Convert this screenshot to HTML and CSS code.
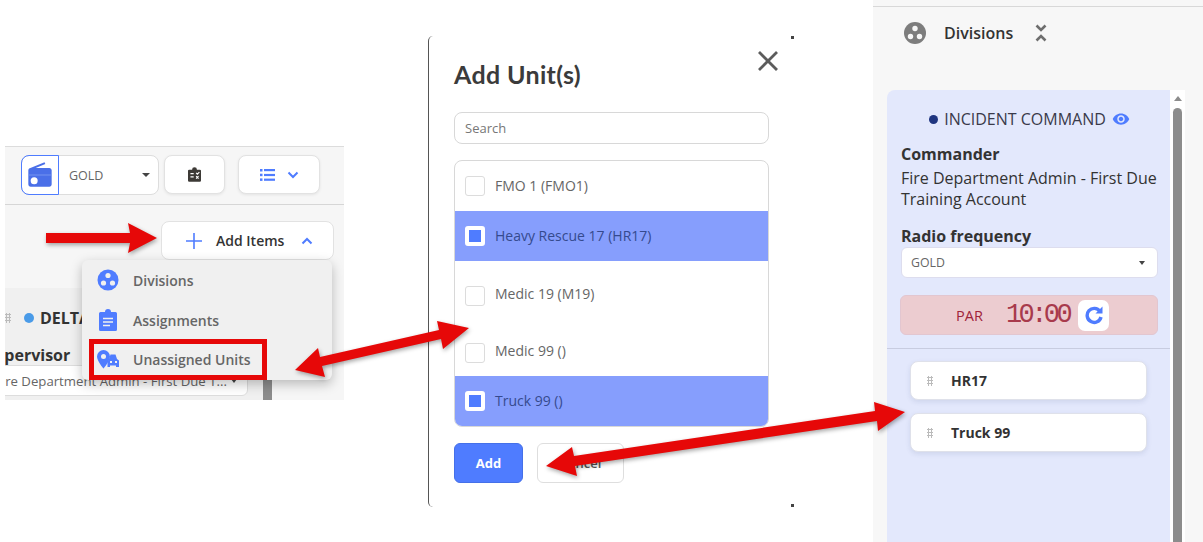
FILE: index.html
```html
<!DOCTYPE html>
<html lang="en">

<head>
    <meta charset="UTF-8">
    <title>Add Units</title>
    <link rel="stylesheet" href="styles.css">
</head>

<body>

    <!-- left shot: toolbar and add items menu -->
    <section class="shot-toolbar">
        <div class="toolbar">
            <div class="radio-group">
                <span class="radio-icon">
                    <svg width="28" height="28" viewBox="0 0 24 24"><path d="M3.240 6.150C2.510 6.430 2 7.170 2 8v12c0 1.100.89 2 2 2h16c1.110 0 2-.9 2-2V8c0-1.110-.89-2-2-2H8.300l8.260-3.340L15.880 1 3.240 6.150z" fill="#4a6fe8"/><circle cx="7" cy="17" r="3" fill="#fff"/><path d="M2.500 12h19" stroke="#6f8ff0" stroke-width="1"/></svg>
                </span>
                <span class="radio-value">GOLD</span>
                <span class="caret"></span>
            </div>
            <button class="tool-btn btn-clip">
                <svg width="13" height="15" viewBox="0 0 16 18"><path d="M1.500 3H5a3 3 0 0 1 6 0h3.500A1.500 1.500 0 0 1 16 4.500V16.500A1.500 1.500 0 0 1 14.500 18H1.500A1.500 1.500 0 0 1 0 16.500V4.500A1.500 1.500 0 0 1 1.500 3z" fill="#3d3a36"/><path d="M3 8h4M3 12h4M10 7l1.500 1.500L14 6M10 11l3 3M13 11l-3 3" stroke="#fff" stroke-width="1.400" fill="none"/></svg>
            </button>
            <button class="tool-btn btn-list">
                <svg width="15" height="12" viewBox="0 0 15 12" fill="#4f7cff"><rect x="0" y="0" width="2.500" height="2.500"/><rect x="4" y="0" width="11" height="2.200"/><rect x="0" y="4.700" width="2.500" height="2.500"/><rect x="4" y="4.900" width="11" height="2.200"/><rect x="0" y="9.400" width="2.500" height="2.500"/><rect x="4" y="9.600" width="11" height="2.200"/></svg>
                <svg width="12" height="8" viewBox="0 0 12 8" fill="none" stroke="#4f7cff" stroke-width="2"><path d="M1.500 1.500 6 6l4.500-4.500"/></svg>
            </button>
        </div>

        <div class="add-row">
            <button class="add-btn">
                <svg width="16" height="16" viewBox="0 0 16 16" stroke="#4f7cff" stroke-width="1.600"><path d="M8 0v16M0 8h16"/></svg>
                <span class="add-label">Add Items</span>
                <svg width="12" height="8" viewBox="0 0 12 8" fill="none" stroke="#4f7cff" stroke-width="2"><path d="M1.500 6.500 6 2l4.500 4.500"/></svg>
            </button>
        </div>

        <div class="delta-card">
            <div class="delta-title">
                <span class="grip grip-left"></span>
                <span class="dot dot-delta"></span>
                <span>DELTA</span>
            </div>
            <div class="delta-label">Supervisor</div>
            <div class="delta-select">
                <span class="delta-value">Fire Department Admin - First Due T...</span>
                <span class="caret caret-small"></span>
            </div>
        </div>
        <div class="delta-scroll"></div>

        <div class="add-menu">
            <div class="menu-item">
                <svg width="22" height="22" viewBox="0 0 22 22"><circle cx="11" cy="11" r="10.500" fill="#4f7cff"/><circle cx="11" cy="6.500" r="2.600" fill="#f0f0f0"/><circle cx="6.500" cy="14" r="2.600" fill="#f0f0f0"/><circle cx="15.500" cy="14" r="2.600" fill="#f0f0f0"/></svg>
                <span>Divisions</span>
            </div>
            <div class="menu-item">
                <svg width="22" height="22" viewBox="0 0 22 22"><path d="M3.500 3H8a3 3 0 0 1 6 0h4.500A1.500 1.500 0 0 1 20 4.500v16a1.500 1.500 0 0 1-1.500 1.500h-15A1.500 1.500 0 0 1 2 20.500v-16A1.500 1.500 0 0 1 3.500 3z" fill="#4f7cff"/><path d="M6 9.500h10M6 13h10M6 16.500h7" stroke="#f0f0f0" stroke-width="1.600"/></svg>
                <span>Assignments</span>
            </div>
            <div class="menu-item menu-item-marked">
                <svg width="22" height="19" viewBox="0 0 22 19"><path d="M6.500 0A6.500 6.500 0 0 0 0 6.500C0 11 6.500 18.500 6.500 18.500S13 11 13 6.500A6.500 6.500 0 0 0 6.500 0z" fill="#4f7cff"/><circle cx="6.500" cy="6.500" r="2.500" fill="#f0f0f0"/><path d="M12 9l1.500-4.500h5L20 9l2 1.500V17h-3v-1.500h-6V17h-2.500v-5z" fill="#4f7cff"/><rect x="13" y="11" width="2" height="2" fill="#f0f0f0"/><rect x="18" y="11" width="2" height="2" fill="#f0f0f0"/></svg>
                <span>Unassigned Units</span>
            </div>
        </div>
    </section>

    <!-- middle shot: add units dialog -->
    <section class="shot-modal">
        <span class="corner corner-top"></span>
        <span class="corner corner-bottom"></span>
        <svg class="modal-close" width="20" height="20" viewBox="0 0 20 20" stroke="#5c5c5c" stroke-width="2.800"><path d="M1 1l18 18M19 1 1 19"/></svg>
        <h2 class="modal-title">Add Unit(s)</h2>
        <div class="modal-search">Search</div>
        <ul class="unit-list">
            <li class="unit-row"><span class="check"></span>FMO 1 (FMO1)</li>
            <li class="unit-row selected"><span class="check"></span>Heavy Rescue 17 (HR17)</li>
            <li class="unit-row row-medic19"><span class="check"></span>Medic 19 (M19)</li>
            <li class="unit-row row-medic99"><span class="check"></span>Medic 99 ()</li>
            <li class="unit-row selected"><span class="check"></span>Truck 99 ()</li>
        </ul>
        <div class="modal-actions">
            <button class="btn-add">Add</button>
            <button class="btn-cancel">Cancel</button>
        </div>
    </section>

    <!-- right shot: divisions column -->
    <section class="shot-divisions">
        <div class="div-rule"></div>
        <div class="div-header">
            <svg width="22" height="22" viewBox="0 0 22 22"><circle cx="11" cy="11" r="11" fill="#7d7d7d"/><circle cx="11" cy="6.500" r="2.700" fill="#f7f7f7"/><circle cx="6.500" cy="14.500" r="2.700" fill="#f7f7f7"/><circle cx="15.500" cy="14.500" r="2.700" fill="#f7f7f7"/></svg>
            <span class="div-title">Divisions</span>
            <svg class="div-toggle" width="12" height="18" viewBox="0 0 12 18" fill="none" stroke="#6e6e6e" stroke-width="2.600"><path d="M1.500 1.500 6 6l4.500-4.500M1.500 16.500 6 12l4.500 4.500"/></svg>
        </div>

        <div class="div-body">
            <div class="command-card">
                <div class="command-top">
                    <div class="command-title">
                        <span class="dot dot-command"></span>
                        <span>INCIDENT COMMAND</span>
                        <svg width="18" height="18" viewBox="0 0 24 24" fill="#4f7cff"><path d="M12 4.500C7 4.500 2.730 7.610 1 12c1.730 4.390 6 7.500 11 7.500s9.270-3.110 11-7.500c-1.730-4.390-6-7.500-11-7.500zM12 17c-2.760 0-5-2.240-5-5s2.240-5 5-5 5 2.240 5 5-2.240 5-5 5zm0-8c-1.660 0-3 1.340-3 3s1.340 3 3 3 3-1.340 3-3-1.340-3-3-3z"/></svg>
                    </div>
                    <div class="field-label">Commander</div>
                    <div class="field-text">Fire Department Admin - First Due Training Account</div>
                    <div class="field-label label-radio">Radio frequency</div>
                    <div class="freq-select">
                        <span>GOLD</span>
                        <span class="caret caret-small"></span>
                    </div>
                    <div class="par-box">
                        <span class="par-label">PAR</span>
                        <span class="par-time">10:00</span>
                        <span class="par-reset">
                            <svg width="20" height="20" viewBox="0 0 20 20" fill="none"><path d="M16 6.500A7 7 0 1 0 17 12" stroke="#4f7cff" stroke-width="3.400"/><path d="M18.500 1.500v7h-7z" fill="#4f7cff"/></svg>
                        </span>
                    </div>
                </div>
                <div class="unit-cards">
                    <div class="unit-card"><span class="grip"></span>HR17</div>
                    <div class="unit-card"><span class="grip"></span>Truck 99</div>
                </div>
            </div>
            <div class="card-scroll">
                <span class="scroll-up"></span>
                <span class="scroll-thumb"></span>
            </div>
        </div>
    </section>

    <!-- red arrows drawn over the three shots -->
    <svg class="arrows" width="1203" height="542" viewBox="0 0 1203 542" fill="#e60808">
        <polygon points="46,233 130,233 128,223 157,238 128,253 130,243 46,243"/>
        <polygon points="295,370 318,348 320,357 439,330 437,321 469,328 443,349 441,339 322,366 325,377"/>
        <polygon points="546,466 572,447 574,456 875,411 874,402 905,412 878,431 877,421 575,466 577,476"/>
    </svg>

</body>

</html>
```

FILE: styles.css
```css
* {
    box-sizing: border-box;
}

html,
body {
    margin: 0;
    padding: 0;
}

body {
    position: relative;
    width: 1203px;
    height: 542px;
    overflow: hidden;
    background-color: white;
    font-family: "Open Sans", sans-serif;
    color: #333;
}

button {
    font-family: inherit;
}

.caret {
    width: 0;
    height: 0;
    border-left: 4px solid transparent;
    border-right: 4px solid transparent;
    border-top: 4px solid #444;
}

.caret-small {
    border-left-width: 3.5px;
    border-right-width: 3.5px;
}

.dot {
    display: inline-block;
    border-radius: 50%;
}

.grip {
    display: inline-block;
    width: 6px;
    height: 10px;
    background-image: radial-gradient(#bbb 1px, transparent 1.2px);
    background-size: 3px 3px;
}

/* left shot */
.shot-toolbar {
    position: absolute;
    left: 5px;
    top: 146px;
    width: 339px;
    height: 254px;
    overflow: hidden;
    background-color: #f6f6f6;
    border-top: 1px solid #dcdcdc;
}

.toolbar {
    display: flex;
    height: 58px;
    padding: 8px 0 0 16px;
    border-bottom: 1px solid #d6d6d6;
}

.radio-group {
    display: flex;
    align-items: center;
    width: 138px;
    height: 40px;
    background-color: white;
    border: 1px solid #ddd;
    border-radius: 8px;
}

.radio-icon {
    display: flex;
    align-items: center;
    justify-content: center;
    width: 38px;
    height: 40px;
    margin: -1px 0 -1px -1px;
    border: 1px solid #4f7cff;
    border-radius: 8px 0 0 8px;
}

.radio-value {
    flex: 1;
    padding-left: 10px;
    font-size: 12.500px;
    color: #666;
}

.radio-group .caret {
    margin-right: 8px;
}

.tool-btn {
    display: flex;
    align-items: center;
    justify-content: center;
    height: 39px;
    padding: 0;
    background-color: white;
    border: 1px solid #e2e2e2;
    border-radius: 8px;
    box-shadow: 0 1px 3px rgba(0, 0, 0, 0.08);
}

.btn-clip {
    width: 61px;
    margin-left: 5px;
}

.btn-list {
    width: 82px;
    margin-left: 13px;
    gap: 12px;
}

.add-row {
    display: flex;
    justify-content: flex-end;
    padding: 16px 10px 0 0;
}

.add-btn {
    display: flex;
    align-items: center;
    width: 173px;
    height: 39px;
    padding: 0 20px 0 24px;
    background-color: white;
    border: 1px solid #e2e2e2;
    border-radius: 8px;
    font-size: 14px;
    font-weight: 600;
    color: #333;
}

.add-label {
    flex: 1;
    padding-left: 14px;
    text-align: left;
}

.delta-card {
    width: 258px;
    height: 112px;
    margin-top: 28px;
    overflow: hidden;
    background-color: #f0f0f0;
}

.delta-title {
    display: flex;
    align-items: center;
    height: 57px;
    padding-top: 2px;
    font-size: 16px;
    font-weight: 700;
}

.dot-delta {
    width: 10px;
    height: 10px;
    margin: 0 6px 0 13px;
    background-color: #4a9be8;
}

.grip-left {
    margin-left: 0;
}

.delta-label {
    margin-left: -20px;
    font-size: 16px;
    font-weight: 700;
    line-height: 20px;
}

.delta-select {
    display: flex;
    align-items: center;
    width: 263px;
    height: 31px;
    margin: 0 0 0 -20px;
    padding: 0 10px 0 9px;
    background-color: white;
    border: 1px solid #ddd;
    border-radius: 6px;
    font-size: 13.200px;
    color: #666;
    white-space: nowrap;
}

.delta-value {
    flex: 1;
}

.delta-scroll {
    position: absolute;
    left: 258px;
    top: 233px;
    width: 9px;
    height: 20px;
    background-color: #8c8c8c;
}

.add-menu {
    position: absolute;
    left: 77px;
    top: 113px;
    width: 250px;
    height: 120px;
    background-color: #f0f0f0;
    border-radius: 6px;
    box-shadow: 0 4px 12px rgba(0, 0, 0, 0.25);
}

.menu-item {
    display: flex;
    align-items: center;
    gap: 14px;
    height: 40px;
    padding-left: 15px;
    font-size: 14px;
    font-weight: 600;
    color: #666;
}

.menu-item-marked {
    width: 178px;
    height: 41px;
    margin: -1px 0 0 7px;
    padding-left: 3px;
    border: 5px solid #e60808;
}

/* middle shot */
.shot-modal {
    position: absolute;
    left: 428px;
    top: 36px;
    width: 366px;
    height: 471px;
    padding: 0 25px;
    background-color: white;
    border-left: 1px solid #555;
    border-top-left-radius: 5px;
    border-bottom-left-radius: 5px;
}

.corner {
    position: absolute;
    right: 0;
    width: 3px;
    height: 3px;
    background-color: #444;
}

.corner-top {
    top: 0;
}

.corner-bottom {
    bottom: 0;
}

.modal-close {
    position: absolute;
    left: 329px;
    top: 15px;
}

.modal-title {
    margin: 0;
    padding-top: 21px;
    height: 76px;
    font-family: Lato, sans-serif;
    font-size: 25px;
    font-weight: 700;
    line-height: 34px;
    letter-spacing: 0.350px;
    color: #3b3b3b;
}

.modal-search {
    height: 32px;
    padding-left: 10px;
    border: 1px solid #d8d8d8;
    border-radius: 8px;
    font-size: 13px;
    line-height: 30px;
    color: #777;
}

.unit-list {
    height: 267px;
    margin: 16px 0 16px 0;
    padding: 0;
    overflow: hidden;
    list-style-type: none;
    border: 1px solid #d8d8d8;
    border-radius: 8px;
}

.unit-row {
    display: flex;
    align-items: center;
    height: 50px;
    padding: 0 0 2px 10px;
    font-size: 14px;
    color: #666;
}

.row-medic19 {
    height: 59px;
    padding-top: 7px;
}

.row-medic19 .check {
    margin-top: 6px;
}

.row-medic99 {
    height: 56px;
    padding-top: 6px;
}

.row-medic99 .check {
    margin-top: 5px;
}

.check {
    width: 20px;
    height: 20px;
    margin: 2px 10px 0 0;
    background-color: white;
    border: 1px solid #dcdcdc;
    border-radius: 3px;
}

.selected {
    background-color: #869efd;
    color: #354a8e;
}

.selected .check {
    border: 4px solid white;
    background-color: #4f7cff;
}

.modal-actions {
    display: flex;
    gap: 14px;
}

.btn-add {
    width: 69px;
    height: 40px;
    background-color: #4f7cff;
    border: 1px solid #4570e8;
    border-radius: 6px;
    font-size: 13px;
    font-weight: 700;
    color: white;
}

.btn-cancel {
    width: 87px;
    height: 40px;
    background-color: white;
    border: 1px solid #dedede;
    border-radius: 6px;
    font-size: 13px;
    font-weight: 600;
    color: #555;
}

/* right shot */
.shot-divisions {
    position: absolute;
    left: 873px;
    top: 0;
    width: 330px;
    height: 542px;
    padding-left: 14px;
    background-color: #f7f7f7;
}

.div-rule {
    height: 7px;
    margin-left: -14px;
    border-bottom: 1px solid #d8d8d8;
}

.div-header {
    display: flex;
    align-items: center;
    height: 83px;
    padding: 0 0 31px 17px;
}

.div-title {
    margin-left: 18px;
    font-size: 16px;
    font-weight: 600;
}

.div-toggle {
    margin-left: 22px;
}

.div-body {
    display: flex;
    height: 452px;
}

.command-card {
    width: 283px;
    background-color: #e3e8fc;
    border-radius: 8px 0 0 0;
}

.command-top {
    height: 259px;
    padding: 18px 12px 0 14px;
    border-bottom: 1px solid #c8cce0;
}

.command-title {
    display: flex;
    align-items: center;
    justify-content: center;
    height: 22px;
    font-size: 16px;
    color: #3a3a4a;
}

.command-title svg {
    margin-left: 6px;
}

.dot-command {
    width: 9px;
    height: 9px;
    margin-right: 6px;
    background-color: #1f3580;
}

.field-label {
    margin-top: 13px;
    font-size: 16px;
    font-weight: 700;
    line-height: 22px;
}

.label-radio {
    margin-top: 15px;
    line-height: 22px;
}

.field-text {
    margin-top: 3px;
    font-size: 16px;
    line-height: 21px;
}

.freq-select {
    display: flex;
    align-items: center;
    justify-content: space-between;
    width: 257px;
    height: 31px;
    margin-top: 0;
    padding: 0 12px 0 9px;
    background-color: white;
    border: 1px solid #dde;
    border-radius: 6px;
    font-size: 12.300px;
    color: #666;
}

.par-box {
    display: flex;
    align-items: center;
    width: 258px;
    height: 40px;
    margin-top: 17px;
    margin-left: -1px;
    padding-left: 55px;
    background-color: #ecccd0;
    border: 1px solid #e2c6d0;
    border-radius: 6px;
}

.par-label {
    width: 50px;
    font-size: 14.500px;
    color: #a0233a;
}

.par-time {
    width: 72px;
    font-family: "Liberation Mono", monospace;
    font-size: 27px;
    letter-spacing: -3.600px;
    color: #a83a4c;
}

.par-reset {
    display: flex;
    align-items: center;
    justify-content: center;
    width: 31px;
    height: 31px;
    background-color: white;
    border-radius: 7px;
}

.unit-cards {
    display: flex;
    flex-direction: column;
    gap: 13px;
    padding: 12px 0 0 23px;
}

.unit-card {
    display: flex;
    align-items: center;
    width: 237px;
    height: 39px;
    padding-left: 16px;
    background-color: white;
    border: 1px solid #dfe1ea;
    border-radius: 8px;
    box-shadow: 0 2px 5px rgba(60, 70, 120, 0.12);
    font-size: 14px;
    font-weight: 700;
}

.unit-card .grip {
    margin-right: 18px;
}

.card-scroll {
    display: flex;
    flex-direction: column;
    align-items: center;
    width: 15px;
    padding-top: 6px;
    background-color: white;
}

.scroll-up {
    width: 0;
    height: 0;
    border-left: 4px solid transparent;
    border-right: 4px solid transparent;
    border-bottom: 5px solid #8c8c8c;
}

.scroll-thumb {
    flex: 1;
    width: 9px;
    margin-top: 7px;
    background-color: #8c8c8c;
    border-radius: 5px 5px 0 0;
}

/* arrows */
.arrows {
    position: absolute;
    left: 0;
    top: 0;
    filter: drop-shadow(1px 2px 2px rgba(0, 0, 0, 0.35));
}
```
